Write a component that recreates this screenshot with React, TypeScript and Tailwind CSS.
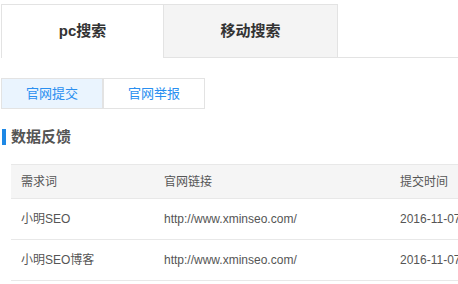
import React from 'react'

const FONT = '[font-family:"Liberation_Sans","Noto_Sans_CJK_SC",sans-serif]'

const ROWS = [
  { word: '小明SEO', url: 'http://www.xminseo.com/', time: '2016-11-07 12:30' },
  { word: '小明SEO博客', url: 'http://www.xminseo.com/', time: '2016-11-07 12:31' },
]

export default function App() {
  return (
    <div className={`w-[458px] h-[284px] overflow-hidden bg-white pt-1 pl-px ${FONT}`}>
      {/* search type tabs */}
      <div className="flex">
        <div className="flex h-[54px] w-[162px] items-center justify-center border-l border-t border-[#e3e3e3] bg-white text-[15px] font-bold text-[#333]">
          pc搜索
        </div>
        <div className="flex h-[54px] w-[175px] items-center justify-center border border-[#e3e3e3] bg-[#f4f4f4] text-[15px] font-bold text-[#333]">
          移动搜索
        </div>
        <div className="flex-1 border-b border-[#e3e3e3]" />
      </div>

      {/* sub buttons */}
      <div className="mt-5 flex">
        <button
          type="button"
          className="h-[31px] w-[102px] border border-[#e3e3e3] bg-[#eaf4fe] text-[13px] text-[#2a8ff0]"
        >
          官网提交
        </button>
        <button
          type="button"
          className="h-[31px] w-[102px] border border-[#e3e3e3] bg-white text-[13px] text-[#2a8ff0]"
        >
          官网举报
        </button>
      </div>

      <h2 className="mt-5 flex h-4 items-center text-[15px] font-bold text-[#555]">
        <span className="ml-px mr-[5px] h-4 w-1 bg-[#1e88e5]" />
        数据反馈
      </h2>

      {/* feedback table */}
      <div className="ml-[10px] mt-[19px] w-[560px] text-[12px] text-[#555]">
        <div className="flex h-[35px] items-center border-y border-[#e8e8e8] bg-[#f5f5f5]">
          <span className="w-[153px] pl-[10px]">需求词</span>
          <span className="w-[236px]">官网链接</span>
          <span>提交时间</span>
        </div>
        {ROWS.map((r) => (
          <div key={r.word} className="flex h-[41px] items-center border-b border-[#e8e8e8]">
            <span className="w-[153px] pl-[10px]">{r.word}</span>
            <span className="w-[236px]">{r.url}</span>
            <span className="whitespace-nowrap">{r.time}</span>
          </div>
        ))}
      </div>
    </div>
  )
}
